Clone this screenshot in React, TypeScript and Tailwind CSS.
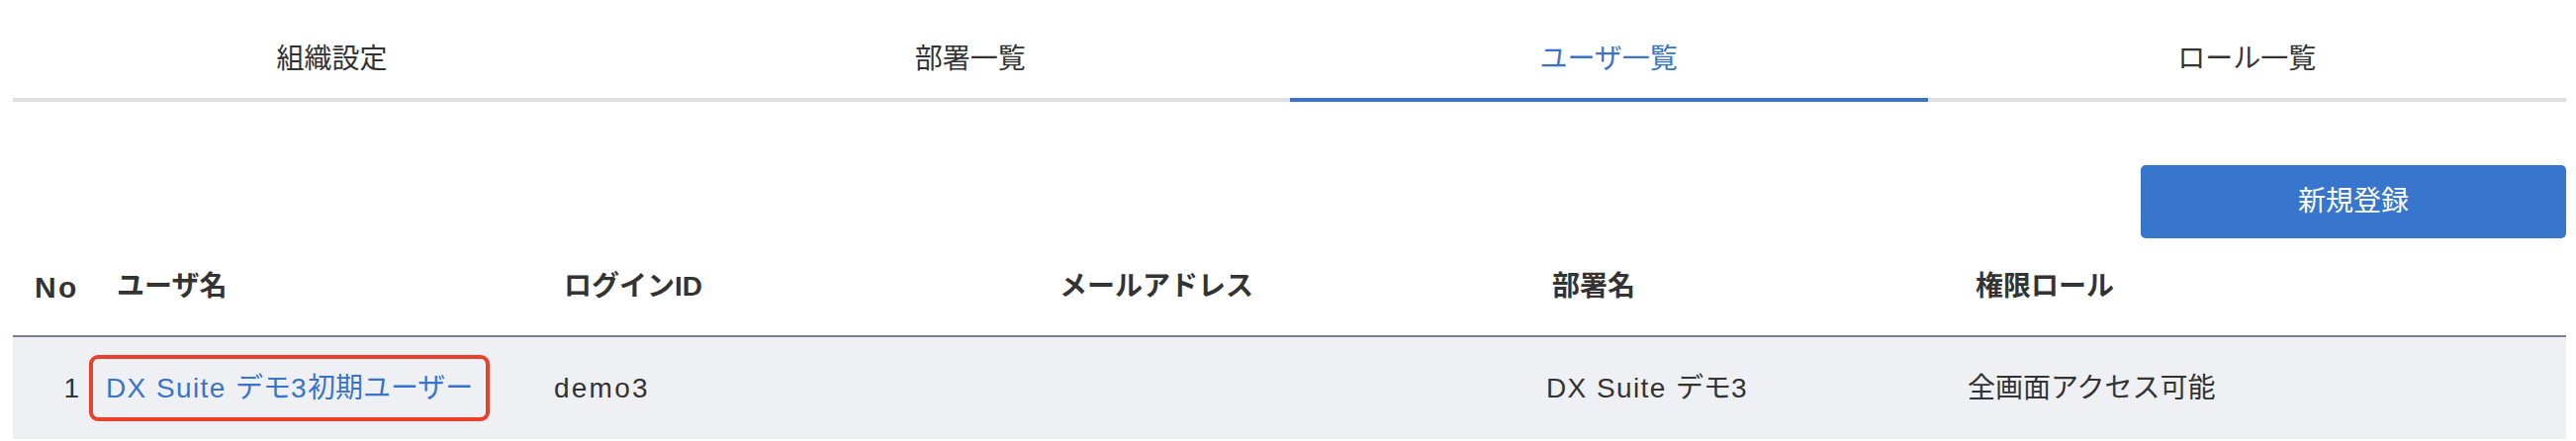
import React from "react";

const font = { fontFamily: '"Liberation Sans", "Noto Sans CJK JP", sans-serif' };

const tabs = ["組織設定", "部署一覧", "ユーザ一覧", "ロール一覧"];

export default function App() {
  return (
    <div className="w-[2604px] h-[446px] overflow-hidden bg-white text-[#333333]" style={font}>
      <div className="ml-[13px] mr-[10px]">
        <div className="grid grid-cols-4">
          {tabs.map((t, i) => (
            <div
              key={t}
              className={`h-[103px] flex items-center justify-center pt-[20px] text-[28px] border-b-4 ${
                i === 2 ? "border-[#3874cb] text-[#3874cb]" : "border-[#e0e0e0] text-[#333333]"
              }`}
            >
              {t}
            </div>
          ))}
        </div>

        <div className="flex justify-end mt-[64px]">
          <button className="w-[430px] h-[74px] rounded-[5px] bg-[#3875cc] text-white text-[28px] flex items-center justify-center">
            新規登録
          </button>
        </div>

        <div className="grid grid-cols-[74px_463px_503px_500px_426px_615px] h-[100px] items-center text-[28px] font-bold text-[#333333] border-b-2 border-[#747e94]">
          <div className="pl-[22px] text-[30px] tracking-[0.08em]">No</div>
          <div className="pl-[31px]">ユーザ名</div>
          <div className="pl-[20px]">ログインID</div>
          <div className="pl-[18px]">メールアドレス</div>
          <div className="pl-[16px]">部署名</div>
          <div className="pl-[18px]">権限ロール</div>
        </div>

        <div className="grid grid-cols-[74px_463px_503px_500px_426px_615px] h-[103px] items-center text-[28px] bg-[#eff0f4] text-[#333333]">
          <div className="text-right pr-[7px]">1</div>
          <div className="pl-[3px]">
            <span className="inline-flex items-center h-[67px] px-[13px] border-4 border-[#e8412b] rounded-[9px] text-[#3874cb] whitespace-pre">
              <span className="tracking-[0.05em]">DX Suite </span>
              <span>デモ</span>
              <span className="tracking-[0.05em]">3</span>
              <span>初期ユーザー</span>
            </span>
          </div>
          <div className="pl-[10px] tracking-[0.08em]">demo3</div>
          <div></div>
          <div className="pl-[10px] whitespace-pre">
            <span className="tracking-[0.05em]">DX Suite </span>
            <span>デモ</span>
            <span className="tracking-[0.05em]">3</span>
          </div>
          <div className="pl-[10px]">全画面アクセス可能</div>
        </div>
      </div>
    </div>
  );
}
